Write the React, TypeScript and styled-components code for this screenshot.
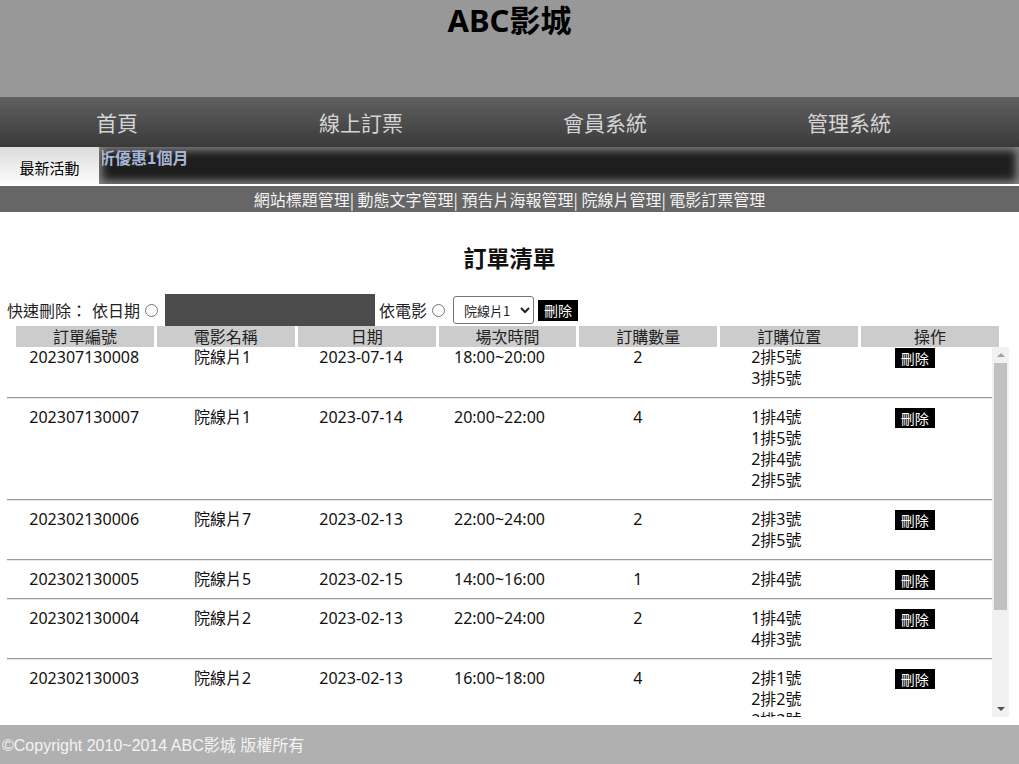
import React from "react";
import styled, { createGlobalStyle } from "styled-components";

const GlobalStyle = createGlobalStyle`
  html, body { margin: 0; padding: 0; }
  body {
    font-family: "Noto Sans", "Noto Sans CJK TC", sans-serif;
    background: #fff;
    color: #111;
  }
`;

const Page = styled.div`
  display: flex;
  flex-direction: column;
  height: 764px;
  overflow: hidden;
`;

const Header = styled.header`
  height: 97px;
  background: #989898;
  display: flex;
  justify-content: center;
`;

const SiteTitle = styled.h1`
  margin: 0;
  padding-top: 2px;
  font-size: 31px;
  font-weight: 700;
  line-height: 36px;
  color: #000;
`;

const Nav = styled.nav`
  height: 50px;
  background: linear-gradient(#606060, #3a3a3a);
  display: flex;
  gap: 10px;
`;

const NavItem = styled.a`
  width: 234px;
  display: flex;
  align-items: center;
  justify-content: center;
  font-size: 21px;
  color: #d4d4d4;
  text-decoration: none;
  font-family: "Noto Sans CJK TC", sans-serif;
`;

const NewsRow = styled.div`
  display: flex;
  height: 37px;
  border-bottom: 2px solid #fff;
`;

const NewsLabel = styled.div`
  width: 99px;
  background: linear-gradient(#dcdcdc, #fcfcfc);
  display: flex;
  align-items: center;
  justify-content: center;
  font-size: 15px;
  color: #000;
  font-family: "Noto Sans CJK TC", sans-serif;
  padding-top: 3px;
  box-sizing: border-box;
`;

const NewsTicker = styled.div`
  flex: 1;
  background: #1e1e1e;
  box-shadow: inset 0 0 8px 3px #8a8a8a;
  padding-left: 3px;
  display: flex;
`;

const TickerClip = styled.div`
  flex: 1;
  overflow: hidden;
`;

const TickerText = styled.span`
  display: block;
  margin-left: -3px;
  font-size: 16px;
  font-weight: 700;
  line-height: 20px;
  color: #a6b6d6;
  font-family: "Noto Sans CJK TC", sans-serif;
  white-space: nowrap;
`;

const AdminBar = styled.div`
  height: 26px;
  background: #666;
  color: #f2f2f2;
  font-size: 16px;
  line-height: 26px;
  text-align: center;
  font-family: "Noto Sans CJK TC", sans-serif;
`;

const AdminLink = styled.a`
  color: #f2f2f2;
  text-decoration: none;
`;

const Main = styled.main`
  flex: 1;
  display: flex;
  flex-direction: column;
`;

const PageTitle = styled.h2`
  margin: 31px 0 23px;
  text-align: center;
  font-size: 23px;
  font-weight: 700;
  line-height: 28px;
  color: #111;
  font-family: "Noto Sans CJK TC", sans-serif;
`;

const Controls = styled.div`
  display: flex;
  align-items: center;
  height: 32px;
  padding-left: 7px;
  font-size: 16px;
  color: #222;
  font-family: "Noto Sans CJK TC", sans-serif;
`;

const Label = styled.span<{ $gap?: number }>`
  margin-left: ${(p) => p.$gap ?? 0}px;
  line-height: 20px;
`;

const Radio = styled.input`
  width: 13px;
  height: 13px;
  margin: 0 0 0 5px;
`;

const DateBox = styled.input`
  width: 210px;
  height: 32px;
  margin-left: 7px;
  border: none;
  background: #4b4b4b;
  box-sizing: border-box;
  color: #fff;
`;

const MovieSelect = styled.select`
  width: 81px;
  height: 28px;
  margin-left: 8px;
  font-size: 13px;
  font-family: "Noto Sans CJK TC", sans-serif;
  border: 1px solid #767676;
  border-radius: 3px;
  background: #fff;
  color: #222;
  padding: 0 2px 0 6px;
`;

const DeleteButton = styled.button<{ $small?: boolean }>`
  width: 40px;
  height: ${(p) => (p.$small ? 20 : 21)}px;
  margin-left: ${(p) => (p.$small ? 0 : 4)}px;
  border: none;
  padding: 0;
  background: #000;
  color: #fff;
  font-size: 14px;
  line-height: 20px;
  font-family: "Noto Sans CJK TC", sans-serif;
  cursor: pointer;
`;

const TableHead = styled.div`
  display: grid;
  grid-template-columns: repeat(7, 1fr);
  gap: 3px;
  width: 983px;
  margin-left: 16px;
`;

const HeadCell = styled.div`
  background: #cccccc;
  height: 21px;
  line-height: 21px;
  text-align: center;
  font-size: 16px;
  color: #222;
  font-family: "Noto Sans CJK TC", sans-serif;
`;

const TableBody = styled.div`
  display: flex;
  width: 1002px;
  height: 370px;
  margin-left: 7px;
`;

const Viewport = styled.div`
  flex: 1;
  overflow-y: auto;
  scrollbar-width: none;
  &::-webkit-scrollbar { display: none; }
`;

const ScrollBar = styled.div`
  width: 17px;
  background: #f1f1f1;
  display: flex;
  flex-direction: column;
`;

const ScrollArrow = styled.div<{ $down?: boolean }>`
  height: 16px;
  display: flex;
  align-items: center;
  justify-content: center;
  &::before {
    content: "";
    width: 0;
    height: 0;
    border-left: 4px solid transparent;
    border-right: 4px solid transparent;
    ${(p) =>
      p.$down
        ? "border-top: 4px solid #505050;"
        : "border-bottom: 4px solid #a3a3a3;"}
  }
`;

const ScrollTrack = styled.div`
  flex: 1;
  padding: 0 2px;
`;

const ScrollThumb = styled.div`
  height: 247px;
  background: #c1c1c1;
`;

const Row = styled.div`
  display: grid;
  grid-template-columns: repeat(7, 1fr);
  padding: 0 8px;
  font-size: 16px;
  line-height: 21px;
  color: #111;
`;

const Cell = styled.div`
  text-align: center;
  display: flex;
  flex-direction: column;
  align-items: center;
`;

const ActionCell = styled.div`
  display: flex;
  justify-content: center;
  padding-top: 1px;
`;

const Separator = styled.hr`
  margin: 8px 0;
  border: none;
  border-top: 1px solid #9a9a9a;
  border-bottom: 1px solid #e6e6e6;
  height: 0;
`;

const Footer = styled.footer`
  height: 39px;
  background: #b0b0b0;
  color: #f4f4f4;
  font-size: 16px;
  line-height: 42px;
  padding-left: 2px;
  font-family: "Liberation Sans", "Noto Sans CJK TC", sans-serif;
`;

type Order = {
  id: string;
  movie: string;
  date: string;
  time: string;
  qty: number;
  seats: string[];
};

const orders: Order[] = [
  { id: "202307130008", movie: "院線片1", date: "2023-07-14", time: "18:00~20:00", qty: 2, seats: ["2排5號", "3排5號"] },
  { id: "202307130007", movie: "院線片1", date: "2023-07-14", time: "20:00~22:00", qty: 4, seats: ["1排4號", "1排5號", "2排4號", "2排5號"] },
  { id: "202302130006", movie: "院線片7", date: "2023-02-13", time: "22:00~24:00", qty: 2, seats: ["2排3號", "2排5號"] },
  { id: "202302130005", movie: "院線片5", date: "2023-02-15", time: "14:00~16:00", qty: 1, seats: ["2排4號"] },
  { id: "202302130004", movie: "院線片2", date: "2023-02-13", time: "22:00~24:00", qty: 2, seats: ["1排4號", "4排3號"] },
  { id: "202302130003", movie: "院線片2", date: "2023-02-13", time: "16:00~18:00", qty: 4, seats: ["2排1號", "2排2號", "2排3號", "2排4號"] },
  { id: "202302130002", movie: "院線片3", date: "2023-02-14", time: "12:00~14:00", qty: 2, seats: ["3排1號", "3排2號"] },
  { id: "202302130001", movie: "院線片1", date: "2023-02-13", time: "10:00~12:00", qty: 1, seats: ["5排5號"] },
];

const navItems = ["首頁", "線上訂票", "會員系統", "管理系統"];
const adminLinks = ["網站標題管理", "動態文字管理", "預告片海報管理", "院線片管理", "電影訂票管理"];
const headers = ["訂單編號", "電影名稱", "日期", "場次時間", "訂購數量", "訂購位置", "操作"];

export default function App() {
  return (
    <>
      <GlobalStyle />
      <Page>
        <Header>
          <SiteTitle>ABC影城</SiteTitle>
        </Header>
        <Nav>
          {navItems.map((n) => (
            <NavItem key={n} href="#">
              {n}
            </NavItem>
          ))}
        </Nav>
        <NewsRow>
          <NewsLabel>最新活動</NewsLabel>
          <NewsTicker>
            <TickerClip>
              <TickerText>折優惠1個月</TickerText>
            </TickerClip>
          </NewsTicker>
        </NewsRow>
        <AdminBar>
          {adminLinks.map((l, i) => (
            <React.Fragment key={l}>
              <AdminLink href="#">{l}</AdminLink>
              {i < adminLinks.length - 1 ? "| " : ""}
            </React.Fragment>
          ))}
        </AdminBar>
        <Main>
          <PageTitle>訂單清單</PageTitle>
          <Controls>
            <Label>快速刪除：</Label>
            <Label $gap={5}>依日期</Label>
            <Radio type="radio" name="quick" />
            <DateBox type="text" aria-label="日期" />
            <Label $gap={4}>依電影</Label>
            <Radio type="radio" name="quick" />
            <MovieSelect defaultValue="院線片1">
              <option>院線片1</option>
              <option>院線片2</option>
              <option>院線片3</option>
            </MovieSelect>
            <DeleteButton>刪除</DeleteButton>
          </Controls>
          <TableHead>
            {headers.map((h) => (
              <HeadCell key={h}>{h}</HeadCell>
            ))}
          </TableHead>
          <TableBody>
            <Viewport>
              {orders.map((o, i) => (
                <React.Fragment key={o.id}>
                  <Row>
                    <Cell>{o.id}</Cell>
                    <Cell>{o.movie}</Cell>
                    <Cell>{o.date}</Cell>
                    <Cell>{o.time}</Cell>
                    <Cell>{o.qty}</Cell>
                    <Cell>
                      {o.seats.map((s) => (
                        <div key={s}>{s}</div>
                      ))}
                    </Cell>
                    <ActionCell>
                      <DeleteButton $small>刪除</DeleteButton>
                    </ActionCell>
                  </Row>
                  {i < orders.length - 1 && <Separator />}
                </React.Fragment>
              ))}
            </Viewport>
            <ScrollBar aria-hidden="true">
              <ScrollArrow />
              <ScrollTrack>
                <ScrollThumb />
              </ScrollTrack>
              <ScrollArrow $down />
            </ScrollBar>
          </TableBody>
        </Main>
        <Footer>©Copyright 2010~2014 ABC影城 版權所有</Footer>
      </Page>
    </>
  );
}
